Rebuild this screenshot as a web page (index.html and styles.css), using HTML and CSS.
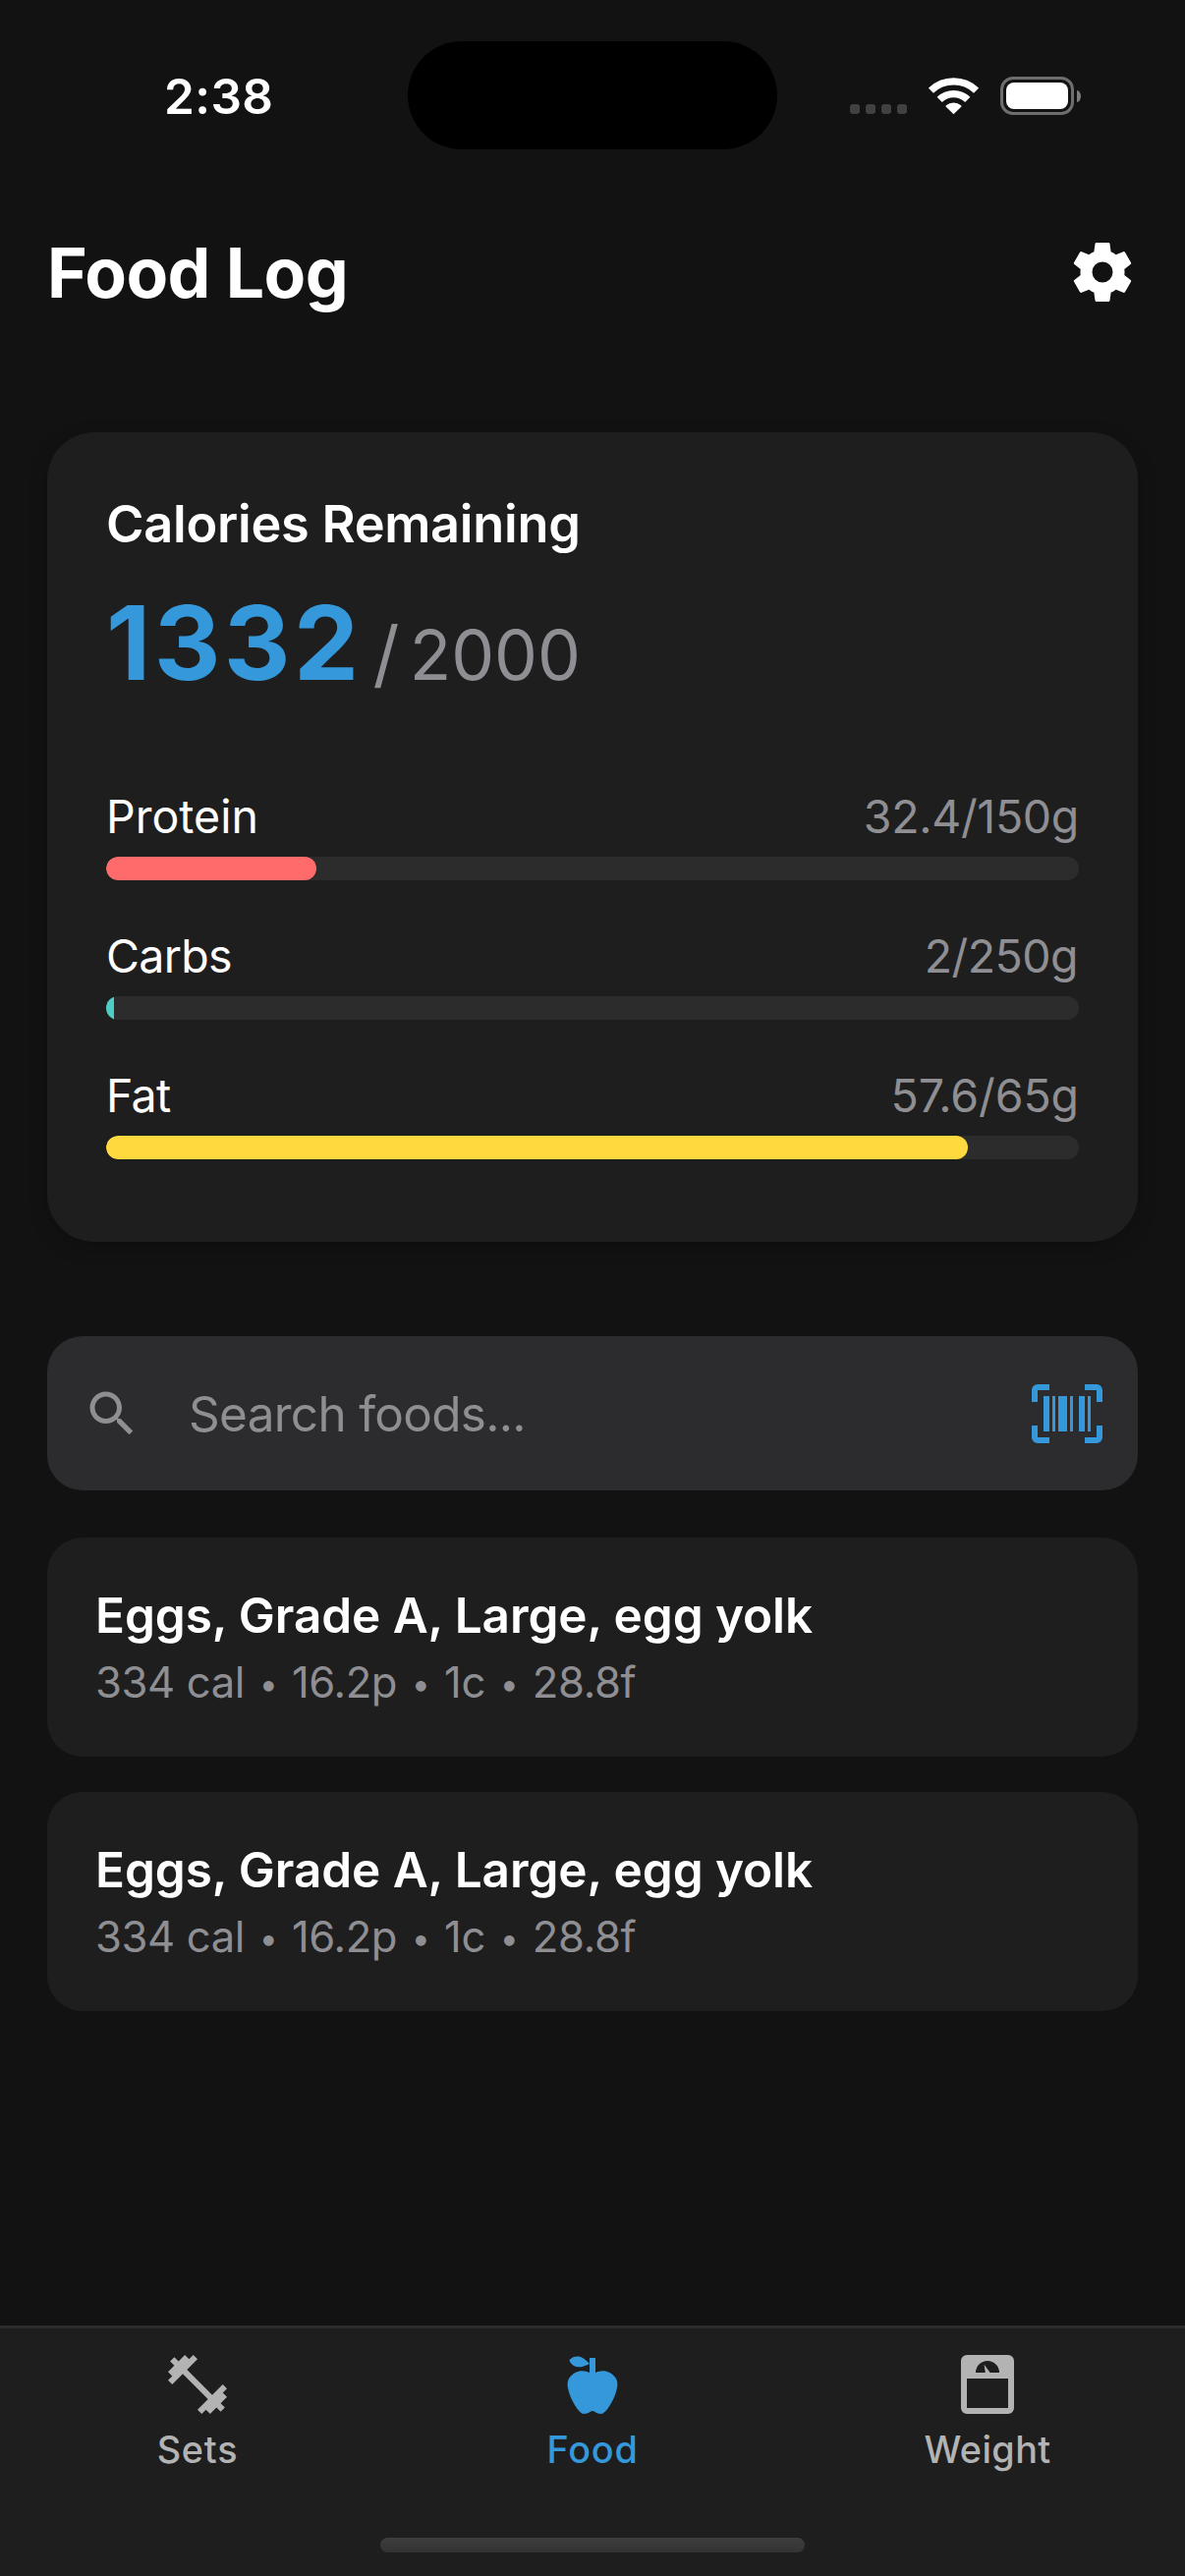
FILE: index.html
```html
<!DOCTYPE html>
<html lang="en">
<head>
  <meta charset="utf-8">
  <title>Food Log</title>
  <link rel="stylesheet" href="styles.css">
</head>
<body>
  <div class="screen">
    <div class="status-bar">
      <div class="status-time">2:38</div>
      <div class="island"></div>
      <div class="status-icons">
        <div class="cell-dots"><i></i><i></i><i></i><i></i></div>
        <svg class="wifi" viewBox="0 0 51 38" width="51" height="38">
          <path d="M2.4 13.2A33.3 33.3 0 0 1 48.6 13.2M11.2 22.4A20.6 20.6 0 0 1 39.8 22.4" fill="none" stroke="#fff" stroke-width="7.4"/>
          <path d="M25.5 37.3L17.8 29.8Q17.2 29 17.9 28.3A12 12 0 0 1 33.1 28.3Q33.8 29 33.2 29.8Z" fill="#fff"/>
        </svg>
        <div class="battery">
          <div class="battery-shell"><div class="battery-level"></div></div>
          <div class="battery-tip"></div>
        </div>
      </div>
    </div>

    <header class="header">
      <h1 class="title">Food Log</h1>
      <svg class="icon-large" viewBox="0 0 24 24"><path fill="#fff" d="M12,15.5A3.5,3.5 0 0,1 8.5,12A3.5,3.5 0 0,1 12,8.5A3.5,3.5 0 0,1 15.5,12A3.5,3.5 0 0,1 12,15.5M19.43,12.97C19.47,12.65 19.5,12.33 19.5,12C19.5,11.67 19.47,11.34 19.43,11L21.54,9.37C21.73,9.22 21.78,8.95 21.66,8.73L19.66,5.27C19.54,5.05 19.27,4.96 19.05,5.05L16.56,6.05C16.04,5.66 15.5,5.32 14.87,5.07L14.5,2.42C14.46,2.18 14.25,2 14,2H10C9.75,2 9.54,2.18 9.5,2.42L9.13,5.07C8.5,5.32 7.96,5.66 7.44,6.05L4.95,5.05C4.73,4.96 4.46,5.05 4.34,5.27L2.34,8.73C2.21,8.95 2.27,9.22 2.46,9.37L4.57,11C4.53,11.34 4.5,11.67 4.5,12C4.5,12.33 4.53,12.65 4.57,12.97L2.46,14.63C2.27,14.78 2.21,15.05 2.34,15.27L4.34,18.73C4.46,18.95 4.73,19.03 4.95,18.95L7.44,17.94C7.96,18.34 8.5,18.68 9.13,18.93L9.5,21.58C9.54,21.82 9.75,22 10,22H14C14.25,22 14.46,21.82 14.5,21.58L14.87,18.93C15.5,18.67 16.04,18.34 16.56,17.94L19.05,18.95C19.27,19.03 19.54,18.95 19.66,18.73L21.66,15.27C21.78,15.05 21.73,14.78 21.54,14.63L19.43,12.97Z"/></svg>
    </header>

    <main class="content">
      <section class="summary">
        <h2 class="summary-title">Calories Remaining</h2>
        <div class="calories"><span class="calories-left">1332</span><span class="calories-goal"><span class="slash">/</span> 2000</span></div>
        <div class="macros">
          <div class="macro">
            <div class="macro-row"><span class="protein-name">Protein</span><span class="macro-value">32.4/150g</span></div>
            <div class="bar"><div class="fill protein" style="width:21.6%"></div></div>
          </div>
          <div class="macro">
            <div class="macro-row"><span class="carbs-name">Carbs</span><span class="macro-value carbs-value">2/250g</span></div>
            <div class="bar"><div class="fill carbs" style="width:0.8%"></div></div>
          </div>
          <div class="macro">
            <div class="macro-row"><span class="fat-name">Fat</span><span class="macro-value fat-value">57.6/65g</span></div>
            <div class="bar"><div class="fill fat" style="width:88.6%"></div></div>
          </div>
        </div>
      </section>

      <div class="search">
        <svg class="icon-search" viewBox="0 0 24 24"><path fill="#8e8e93" d="M15.5 14h-.79l-.28-.27C15.41 12.59 16 11.11 16 9.5 16 5.91 13.09 3 9.5 3S3 5.91 3 9.5 5.91 16 9.5 16c1.61 0 3.09-.59 4.23-1.57l.27.28v.79l5 4.99L20.49 19l-4.99-5zm-6 0C7.01 14 5 11.99 5 9.5S7.01 5 9.5 5 14 7.01 14 9.5 11.99 14 9.5 14z"/></svg>
        <span class="placeholder">Search foods...</span>
        <svg class="icon-large" viewBox="0 0 24 24"><path fill="#3498db" d="M4,6H6V18H4V6M7,6H8V18H7V6M9,6H12V18H9V6M13,6H14V18H13V6M16,6H18V18H16V6M19,6H20V18H19V6M2,4V8H0V4A2,2 0 0,1 2,2H6V4H2M22,2A2,2 0 0,1 24,4V8H22V4H18V2H22M2,16V20H6V22H2A2,2 0 0,1 0,20V16H2M22,20V16H24V20A2,2 0 0,1 22,22H18V20H22Z"/></svg>
      </div>

      <div class="foods">
        <article class="food">
          <div class="food-name">Eggs, Grade A, Large, egg yolk</div>
          <div class="food-info">334 cal <span class="dot">•</span> 16.2p <span class="dot">•</span> 1c <span class="dot">•</span> 28.8f</div>
        </article>
        <article class="food">
          <div class="food-name">Eggs, Grade A, Large, egg yolk</div>
          <div class="food-info">334 cal <span class="dot">•</span> 16.2p <span class="dot">•</span> 1c <span class="dot">•</span> 28.8f</div>
        </article>
      </div>
    </main>

    <nav class="tabs">
      <div class="tab">
        <svg class="icon-large" viewBox="0 0 24 24"><path fill="currentColor" d="M20.57,14.86L22,13.43L20.57,12L17,15.57L8.43,7L12,3.43L10.57,2L9.14,3.43L7.71,2L5.57,4.14L4.14,2.71L2.71,4.14L4.14,5.57L2,7.71L3.43,9.14L2,10.57L3.43,12L7,8.43L15.57,17L12,20.57L13.43,22L14.86,20.57L16.29,22L18.43,19.86L19.86,21.29L21.29,19.86L19.86,18.43L22,16.29L20.57,14.86Z"/></svg>
        <span class="tab-label">Sets</span>
      </div>
      <div class="tab active">
        <svg class="icon-large" viewBox="0 0 24 24"><path fill="currentColor" d="M20,10C22,13 17,22 15,22C13,22 13,21 12,21C11,21 11,22 9,22C7,22 2,13 4,10C6,7 9,7 11,8V5C5.38,8.07 4.11,3.78 4.11,3.78C4.11,3.78 6.77,0.19 11,5V3H13V8C15,7 18,7 20,10Z"/></svg>
        <span class="tab-label">Food</span>
      </div>
      <div class="tab">
        <svg class="icon-large" viewBox="0 0 24 24"><path fill="currentColor" d="M5,2H19A2,2 0 0,1 21,4V20A2,2 0 0,1 19,22H5A2,2 0 0,1 3,20V4A2,2 0 0,1 5,2M12,4A4,4 0 0,0 8,8H11.26L10.85,5.23L12.9,8H16A4,4 0 0,0 12,4M5,10V20H19V10H5Z"/></svg>
        <span class="tab-label weight-label">Weight</span>
      </div>
      <div class="home-indicator"></div>
    </nav>
  </div>
</body>
</html>
```
FILE: styles.css
```css
* { box-sizing: border-box; margin: 0; }

body {
  background: #121212;
  color: #fff;
  font-family: Inter, "Liberation Sans", sans-serif;
}

.screen {
  display: flex;
  flex-direction: column;
  width: 1206px;
  height: 2622px;
}

svg { display: block; flex: none; }
.icon-large { width: 72px; height: 72px; }

/* Status bar */
.status-bar {
  display: grid;
  grid-template-columns: 415px 376px 415px;
  align-items: center;
  height: 194px;
}
.status-time {
  padding: 2px 0 0 167px;
  font-size: 49.5px;
  font-weight: 600;
  line-height: 60px;
  letter-spacing: 0.4px;
}
.island { height: 110px; border-radius: 55px; background: #000; }
.status-icons {
  display: flex;
  align-items: center;
  gap: 22px;
  padding: 1px 0 0 74px;
}
.cell-dots { display: flex; gap: 6px; padding-top: 27px; }
.cell-dots i { width: 10px; height: 10px; border-radius: 3px; background: #414141; }
.battery { display: flex; align-items: center; gap: 3px; }
.battery-shell {
  width: 75px;
  height: 39px;
  padding: 3px;
  border: 3px solid #6e6e6e;
  border-radius: 13px;
}
.battery-level { height: 27px; border-radius: 8px; background: #fff; }
.battery-tip { width: 4px; height: 12px; border-radius: 0 4px 4px 0 / 0 6px 6px 0; background: #7c7c7c; }

/* Header */
.header {
  display: flex;
  align-items: center;
  justify-content: space-between;
  height: 166px;
  padding: 0 48px;
}
.title { padding-top: 2px; font-size: 69.7px; font-weight: 700; line-height: 86px; letter-spacing: -0.61px; }

.content { padding: 80px 48px 0; }

/* Summary card */
.summary {
  height: 824px;
  padding: 60px;
  border-radius: 48px;
  background: #1e1e1e;
  box-shadow: 0 6px 20px rgba(0, 0, 0, 0.2);
}
.summary-title { font-size: 52.3px; font-weight: 600; line-height: 66px; letter-spacing: -0.27px; }
.calories { display: flex; align-items: baseline; gap: 11px; height: 128px; margin-top: 24px; }
.calories-left {
  color: #3498db;
  font-size: 105px;
  font-weight: 700;
  line-height: 128px;
  letter-spacing: 3.39px;
}
.calories-goal {
  color: #8e8e93;
  font-size: 69.7px;
  line-height: 84px;
  letter-spacing: 0;
  word-spacing: -9.5px;
}
.slash { font-size: 75px; }

.macros { display: flex; flex-direction: column; gap: 48px; margin-top: 84px; }
.macro { display: flex; flex-direction: column; gap: 12px; }
.macro-row {
  display: flex;
  justify-content: space-between;
  font-size: 46.5px;
  line-height: 58px;
}
.macro-value { color: #8e8e93; letter-spacing: -0.35px; }
.carbs-value { padding-right: 1px; letter-spacing: -0.55px; }
.fat-value { letter-spacing: -0.1px; }
.protein-name { letter-spacing: 0; }
.carbs-name { letter-spacing: -0.7px; }
.fat-name { letter-spacing: -0.71px; }
.bar { height: 24px; border-radius: 12px; background: #2c2c2c; overflow: hidden; }
.fill { height: 24px; border-radius: 12px; }
.protein { background: #ff6b6b; }
.carbs { border-radius: 0; background: #4ecdc4; }
.fat { background: #ffd93d; }

/* Search */
.search {
  display: flex;
  align-items: center;
  height: 157px;
  margin-top: 96px;
  padding: 0 36px;
  border-radius: 36px;
  background: #2c2c2e;
}
.icon-search { width: 60px; height: 60px; }
.placeholder {
  flex: 1;
  padding-left: 48px;
  color: #8e8e93;
  font-size: 49.5px;
  line-height: 62px;
  letter-spacing: -0.72px;
}

/* Logged foods */
.foods { display: flex; flex-direction: column; gap: 36px; margin-top: 48px; }
.food {
  display: flex;
  flex-direction: column;
  gap: 11px;
  height: 223px;
  padding: 48px 49px;
  border-radius: 36px;
  background: #1e1e1e;
}
.food-name { font-size: 49.5px; font-weight: 600; line-height: 62px; letter-spacing: -0.08px; }
.food-info { color: #8e8e93; font-size: 43.6px; line-height: 54px; letter-spacing: -0.38px; }
.dot { display: inline-block; transform: translateY(1px) scale(0.78); }

/* Tab bar */
.tabs {
  position: relative;
  display: grid;
  grid-template-columns: repeat(3, 1fr);
  height: 255px;
  margin-top: auto;
  border-top: 3px solid #2c2c2c;
  background: #1e1e1e;
}
.tab {
  display: flex;
  flex-direction: column;
  align-items: center;
  gap: 7px;
  padding-top: 21px;
  color: #b3b3b3;
}
.tab.active { color: #3498db; }
.tab-label { font-size: 37.8px; font-weight: 500; line-height: 46px; letter-spacing: 0.8px; }
.weight-label { letter-spacing: 0.4px; }
.home-indicator {
  position: absolute;
  bottom: 24px;
  left: 387px;
  width: 432px;
  height: 15px;
  border-radius: 8px;
  background: linear-gradient(#3e3e3e, #333);
}
```
